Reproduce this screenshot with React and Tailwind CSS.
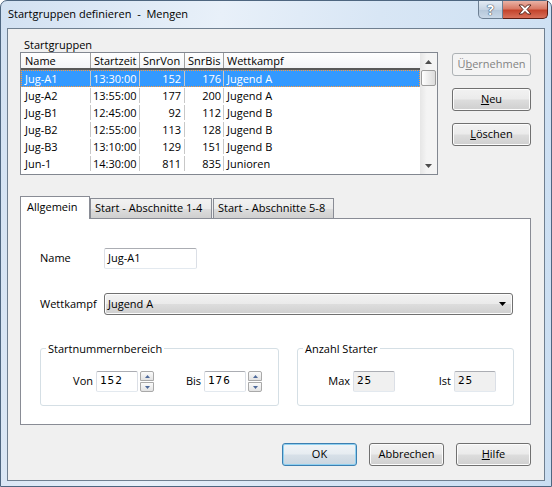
import React from "react";

const rows = [
  { name: "Jug-A1", zeit: "13:30:00", von: "152", bis: "176", wk: "Jugend A", sel: true },
  { name: "Jug-A2", zeit: "13:55:00", von: "177", bis: "200", wk: "Jugend A" },
  { name: "Jug-B1", zeit: "12:45:00", von: "92", bis: "112", wk: "Jugend B" },
  { name: "Jug-B2", zeit: "12:55:00", von: "113", bis: "128", wk: "Jugend B" },
  { name: "Jug-B3", zeit: "13:10:00", von: "129", bis: "151", wk: "Jugend B" },
  { name: "Jun-1", zeit: "14:30:00", von: "811", bis: "835", wk: "Junioren" },
];

const btn =
  "flex items-center justify-center h-[23px] rounded-[3px] border border-[#707070] bg-[linear-gradient(to_bottom,#f2f2f2_0%,#ebebeb_48%,#dddddd_52%,#cfcfcf_100%)] shadow-[inset_0_0_0_1px_#fcfcfc] text-black";

const textbox =
  "h-[21px] border border-[#abadb3] border-l-[#dbdfe6] border-r-[#dbdfe6] border-b-[#e3e9ef] rounded-[2px] flex items-center";

function Arrow({ up, color = "#4d4d4d" }) {
  return (
    <svg width="7" height="4" viewBox="0 0 7 4">
      {up ? <path d="M0 4 L3.5 0 L7 4 Z" fill={color} /> : <path d="M0 0 L7 0 L3.5 4 Z" fill={color} />}
    </svg>
  );
}

function Spinner() {
  return (
    <div className="ml-[2px] flex flex-col w-[14px] h-[21px]">
      <div className="h-[10px] border border-[#a9a9a9] rounded-t-[2px] bg-[linear-gradient(to_bottom,#fbfbfb,#e3e3e3)] flex items-center justify-center">
        <svg width="5" height="3" viewBox="0 0 5 3"><path d="M0 3 L2.5 0 L5 3 Z" fill="#4f6a9a" /></svg>
      </div>
      <div className="mt-[1px] h-[10px] border border-[#a9a9a9] rounded-b-[2px] bg-[linear-gradient(to_bottom,#fbfbfb,#e3e3e3)] flex items-center justify-center">
        <svg width="5" height="3" viewBox="0 0 5 3"><path d="M0 0 L5 0 L2.5 3 Z" fill="#4f6a9a" /></svg>
      </div>
    </div>
  );
}

export default function App() {
  return (
    <div className="w-[552px] h-[487px] font-['Open_Sans',sans-serif] text-[11px] text-black">
      <div className="w-[552px] h-[487px] flex flex-col border border-[#4e6680] rounded-t-[7px] bg-[linear-gradient(100deg,#d2e1f2_0%,#e8f0f9_35%,#d8e6f5_60%,#cadef2_100%)]">
        {/* title bar */}
        <div className="h-[27px] flex items-start shrink-0">
          <div className="pl-[7px] pt-[5px] text-[11px] leading-[16px] whitespace-pre">Startgruppen definieren  -  Mengen</div>
          <div className="ml-auto flex mr-[3px]">
            <div className="w-[25px] h-[18px] border border-[#6d7f93] border-t-0 rounded-bl-[5px] bg-[linear-gradient(to_bottom,#e3ebf4,#c6d4e3_50%,#b4c6d9_51%,#c9d8e8)] flex items-center justify-center">
              <span className="text-[14px] leading-[14px] font-bold text-white [text-shadow:0_0_1px_#3b4d62,0_0_1px_#3b4d62,0_0_1px_#3b4d62]">?</span>
            </div>
            <div className="w-[45px] h-[18px] border border-[#5b1d14] border-t-0 border-l-0 rounded-br-[5px] bg-[linear-gradient(to_bottom,#eab3a6,#d97a66_45%,#c4442c_55%,#d8705a)] flex items-center justify-center">
              <svg width="16" height="11" viewBox="0 0 16 11">
                <path d="M2 1 L5.5 1 L8 3.6 L10.5 1 L14 1 L10 5.5 L14 10 L10.5 10 L8 7.4 L5.5 10 L2 10 L6 5.5 Z" fill="#fff" stroke="#4a1810" strokeWidth="0.9" />
              </svg>
            </div>
          </div>
        </div>

        {/* client area */}
        <div className="mx-[6px] h-[453px] border border-[#6f7f90] bg-[#f0f0f0] flex flex-col">
          {/* top section */}
          <div className="flex pl-[12px] pt-[8px]">
            <div className="w-[418px] flex flex-col">
              <div className="h-[15px] leading-[15px] pl-[4px]">Startgruppen</div>
              <div className="h-[123px] border border-[#828790] bg-white flex">
                <div className="flex-1 flex flex-col">
                  <div className="h-[17px] flex border-b-2 border-[#595959] bg-[linear-gradient(to_bottom,#ffffff,#f3f4f6)] leading-[15px]">
                    <div className="w-[70px] pl-[4px] border-r border-[#a0a0a0]">Name</div>
                    <div className="w-[49px] pl-[3px] border-r border-[#a0a0a0]">Startzeit</div>
                    <div className="w-[45px] pl-[3px] border-r border-[#a0a0a0]">SnrVon</div>
                    <div className="w-[39px] pl-[3px] border-r border-[#a0a0a0]">SnrBis</div>
                    <div className="flex-1 pl-[3px]">Wettkampf</div>
                  </div>
                  {rows.map((r) => (
                    <div
                      key={r.name}
                      className={
                        "h-[17px] flex leading-[15px] " +
                        (r.sel ? "bg-[#3399ff] text-white border border-dotted border-[#ff9a3c]" : "border border-transparent")
                      }
                    >
                      <div className="w-[69px] pl-[3px] border-r border-[#c8c8c8]">{r.name}</div>
                      <div className="w-[49px] pl-[2px] border-r border-[#c8c8c8]">{r.zeit}</div>
                      <div className="w-[45px] pr-[3px] text-right border-r border-[#c8c8c8]">{r.von}</div>
                      <div className="w-[39px] pr-[2px] text-right border-r border-[#c8c8c8]">{r.bis}</div>
                      <div className="flex-1 pl-[3px]">{r.wk}</div>
                    </div>
                  ))}
                </div>
                {/* scrollbar */}
                <div className="w-[17px] flex flex-col bg-[linear-gradient(to_right,#e6e6e6,#f4f4f4_40%,#f4f4f4)]">
                  <div className="h-[17px] flex items-center justify-center"><Arrow up /></div>
                  <div className="h-[16px] mx-[1px] border border-[#9b9b9b] rounded-[2px] bg-[linear-gradient(to_right,#ffffff,#ececec_50%,#dcdcdc)]" />
                  <div className="flex-1" />
                  <div className="h-[17px] flex items-center justify-center"><Arrow /></div>
                </div>
              </div>
            </div>
            <div className="ml-[14px] pt-[16px] flex flex-col gap-[12px]">
              <div className="w-[79px] h-[23px] rounded-[3px] border border-[#adb2b5] bg-[#f4f4f4] flex items-center justify-center text-[#838383]">
                <span>Ü<span className="underline">b</span>ernehmen</span>
              </div>
              <div className={btn + " w-[79px]"}>
                <span><span className="underline">N</span>eu</span>
              </div>
              <div className={btn + " w-[79px]"}>
                <span><span className="underline">L</span>öschen</span>
              </div>
            </div>
          </div>

          {/* tabs */}
          <div className="ml-[12px] mt-[21px] w-[511px] flex flex-col">
            <div className="h-[22px] flex items-end relative z-10">
              <div className="w-[70px] h-[23px] -mb-[1px] border border-b-0 border-[#898c95] bg-white pl-[6px] pt-[2px] leading-[16px]">
                Allgemein
              </div>
              <div className="w-[122px] h-[20px] border border-b-0 border-[#898c95] bg-[linear-gradient(to_bottom,#f2f2f2,#ebebeb_50%,#dddddd_51%,#cfcfcf)] pl-[4px] leading-[18px]">
                Start - Abschnitte 1-4
              </div>
              <div className="ml-[1px] w-[121px] h-[20px] border border-b-0 border-[#898c95] bg-[linear-gradient(to_bottom,#f2f2f2,#ebebeb_50%,#dddddd_51%,#cfcfcf)] pl-[4px] leading-[18px]">
                Start - Abschnitte 5-8
              </div>
            </div>
            <div className="h-[207px] border border-[#898c95] bg-white flex flex-col pl-[19px]">
              <div className="mt-[29px] flex items-center">
                <div className="w-[64px]">Name</div>
                <div className={textbox + " w-[93px] pl-[3px]"}>Jug-A1</div>
              </div>
              <div className="mt-[24px] flex items-center">
                <div className="w-[64px]">Wettkampf</div>
                <div className="w-[409px] h-[22px] rounded-[3px] border border-[#707070] bg-[linear-gradient(to_bottom,#f2f2f2,#ebebeb_48%,#dddddd_52%,#cfcfcf)] shadow-[inset_0_0_0_1px_#fcfcfc] flex items-center pl-[3px] pr-[6px]">
                  <span className="flex-1">Jugend A</span>
                  <Arrow color="#000" />
                </div>
              </div>
              <div className="mt-[26px] flex">
                <fieldset className="w-[239px] h-[65px] border border-[#d5dfe5] rounded-[3px]">
                  <legend className="ml-[5px] px-[2px] leading-[15px]">Startnummernbereich</legend>
                  <div className="mt-[15px] flex items-center">
                    <div className="w-[52px] text-right">Von</div>
                    <div className={textbox + " ml-[3px] w-[42px] pl-[3px] font-['DejaVu_Sans_Mono',monospace] tracking-[1px]"}>152</div>
                    <Spinner />
                    <div className="w-[47px] text-right">Bis</div>
                    <div className={textbox + " ml-[3px] w-[42px] pl-[3px] font-['DejaVu_Sans_Mono',monospace] tracking-[1px]"}>176</div>
                    <Spinner />
                  </div>
                </fieldset>
                <fieldset className="ml-[18px] w-[217px] h-[65px] border border-[#d5dfe5] rounded-[3px]">
                  <legend className="ml-[5px] px-[2px] leading-[15px]">Anzahl Starter</legend>
                  <div className="mt-[15px] flex items-center">
                    <div className="w-[52px] text-right">Max</div>
                    <div className={textbox + " ml-[3px] w-[42px] pl-[3px] bg-[#f0f0f0] font-['DejaVu_Sans_Mono',monospace] tracking-[1px]"}>25</div>
                    <div className="w-[56px] text-right">Ist</div>
                    <div className={textbox + " ml-[3px] w-[42px] pl-[3px] bg-[#f0f0f0] font-['DejaVu_Sans_Mono',monospace] tracking-[1px]"}>25</div>
                  </div>
                </fieldset>
              </div>
            </div>
          </div>

          {/* bottom buttons */}
          <div className="mt-[18px] flex justify-end gap-[12px] pr-[13px]">
            <div className="w-[75px] h-[23px] rounded-[3px] border border-[#3c7fb1] bg-[linear-gradient(to_bottom,#f0f4f7,#e6ecf1_48%,#d7e0e8_52%,#cad6e0)] shadow-[inset_0_0_0_1px_#8fd0f0] flex items-center justify-center">
              OK
            </div>
            <div className={btn + " w-[75px]"}>Abbrechen</div>
            <div className={btn + " w-[75px]"}>
              <span><span className="underline">H</span>ilfe</span>
            </div>
          </div>
        </div>
      </div>
    </div>
  );
}
